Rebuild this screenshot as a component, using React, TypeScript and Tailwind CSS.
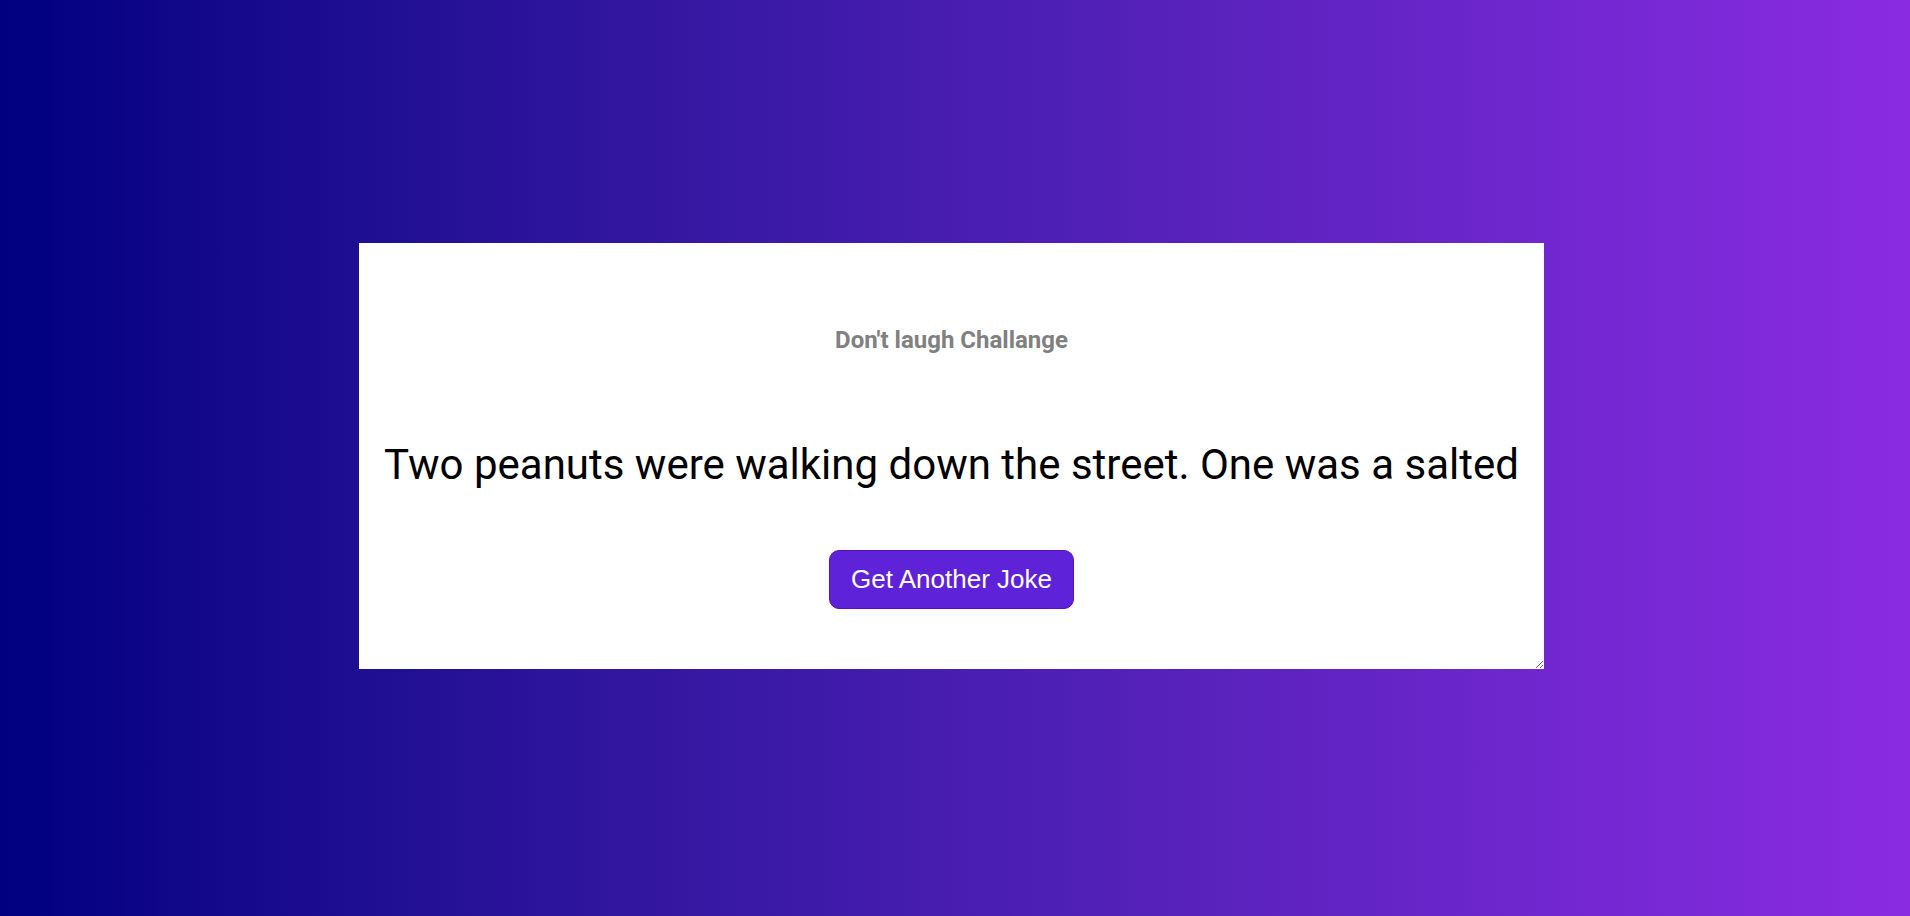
export default function App() {
  return (
    <div className="flex h-[916px] w-full items-center justify-center bg-linear-to-r from-[#000080] to-[#8a2be2]">
      {/* joke card */}
      <div className="mb-[4px] mr-[7px] flex h-[426px] w-[1185px] resize flex-col items-center overflow-auto bg-white px-5 pt-[83px] pb-[60px]">
        <h2 className="h-[28px] text-[24px] leading-[28px] font-bold text-[#808080] [font-family:Roboto,sans-serif]">
          Don't laugh Challange
        </h2>
        <p className="mt-[86px] h-[50px] text-center text-[42px] leading-[50px] whitespace-nowrap text-black [font-family:Roboto,sans-serif]">
          Two peanuts were walking down the street. One was a salted
        </p>
        <button className="mt-[60px] h-[59px] w-[245px] shrink-0 rounded-[10px] border border-[#5b10b0] bg-[#5e22d8] text-[26px] text-white [font-family:'Liberation_Sans',Arial,sans-serif]">
          Get Another Joke
        </button>
      </div>
    </div>
  );
}
